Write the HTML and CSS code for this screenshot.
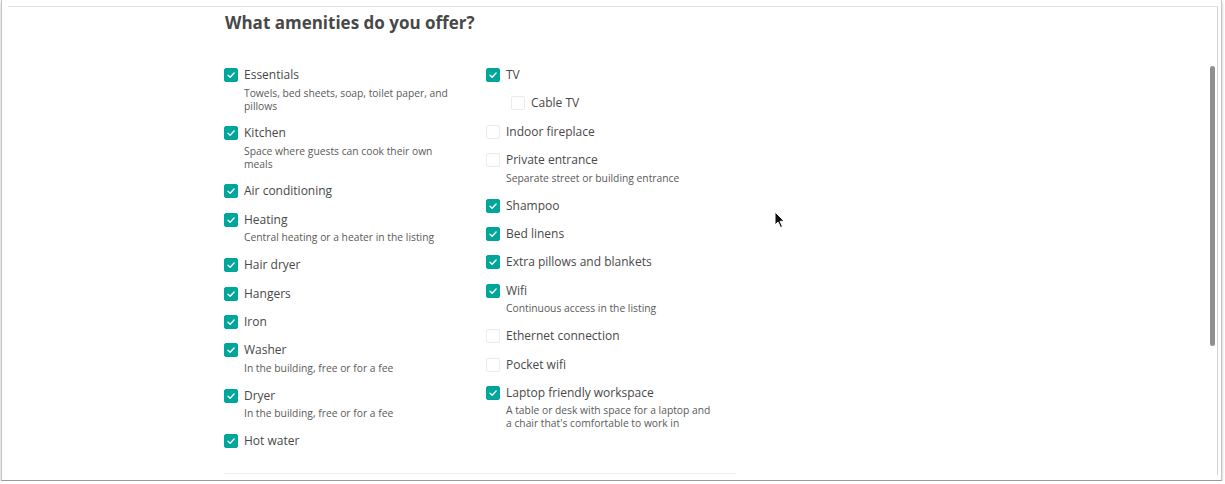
FILE: index.html
```html
<!DOCTYPE html>
<html lang="en">
<head>
  <meta charset="UTF-8" />
  <title>Amenities</title>
  <link rel="stylesheet" href="styles.css">
</head>
<body>
  <div class="window">
    <div class="viewport">
      <div class="content">
        <h2>What amenities do you offer?</h2>

        <div class="columns">
          <!-- left column -->
          <div class="col">
            <div class="item">
              <span class="box on"><svg viewBox="0 0 14 14"><polyline points="3.5,7.2 6,9.6 10.6,4.6" /></svg></span>
              <div><div class="label">Essentials</div><div class="desc">Towels, bed sheets, soap, toilet paper, and pillows</div></div>
            </div>
            <div class="item">
              <span class="box on"><svg viewBox="0 0 14 14"><polyline points="3.5,7.2 6,9.6 10.6,4.6" /></svg></span>
              <div><div class="label">Kitchen</div><div class="desc">Space where guests can cook their own meals</div></div>
            </div>
            <div class="item">
              <span class="box on"><svg viewBox="0 0 14 14"><polyline points="3.5,7.2 6,9.6 10.6,4.6" /></svg></span>
              <div><div class="label">Air conditioning</div></div>
            </div>
            <div class="item">
              <span class="box on"><svg viewBox="0 0 14 14"><polyline points="3.5,7.2 6,9.6 10.6,4.6" /></svg></span>
              <div><div class="label">Heating</div><div class="desc">Central heating or a heater in the listing</div></div>
            </div>
            <div class="item">
              <span class="box on"><svg viewBox="0 0 14 14"><polyline points="3.5,7.2 6,9.6 10.6,4.6" /></svg></span>
              <div><div class="label">Hair dryer</div></div>
            </div>
            <div class="item">
              <span class="box on"><svg viewBox="0 0 14 14"><polyline points="3.5,7.2 6,9.6 10.6,4.6" /></svg></span>
              <div><div class="label">Hangers</div></div>
            </div>
            <div class="item">
              <span class="box on"><svg viewBox="0 0 14 14"><polyline points="3.5,7.2 6,9.6 10.6,4.6" /></svg></span>
              <div><div class="label">Iron</div></div>
            </div>
            <div class="item">
              <span class="box on"><svg viewBox="0 0 14 14"><polyline points="3.5,7.2 6,9.6 10.6,4.6" /></svg></span>
              <div><div class="label">Washer</div><div class="desc">In the building, free or for a fee</div></div>
            </div>
            <div class="item">
              <span class="box on"><svg viewBox="0 0 14 14"><polyline points="3.5,7.2 6,9.6 10.6,4.6" /></svg></span>
              <div><div class="label">Dryer</div><div class="desc">In the building, free or for a fee</div></div>
            </div>
            <div class="item">
              <span class="box on"><svg viewBox="0 0 14 14"><polyline points="3.5,7.2 6,9.6 10.6,4.6" /></svg></span>
              <div><div class="label">Hot water</div></div>
            </div>
          </div>

          <!-- right column -->
          <div class="col">
            <div class="item">
              <span class="box on"><svg viewBox="0 0 14 14"><polyline points="3.5,7.2 6,9.6 10.6,4.6" /></svg></span>
              <div><div class="label">TV</div></div>
            </div>
            <div class="item sub">
              <span class="box"></span>
              <div><div class="label">Cable TV</div></div>
            </div>
            <div class="item">
              <span class="box"></span>
              <div><div class="label">Indoor fireplace</div></div>
            </div>
            <div class="item">
              <span class="box"></span>
              <div><div class="label">Private entrance</div><div class="desc">Separate street or building entrance</div></div>
            </div>
            <div class="item">
              <span class="box on"><svg viewBox="0 0 14 14"><polyline points="3.5,7.2 6,9.6 10.6,4.6" /></svg></span>
              <div><div class="label">Shampoo</div></div>
            </div>
            <div class="item">
              <span class="box on"><svg viewBox="0 0 14 14"><polyline points="3.5,7.2 6,9.6 10.6,4.6" /></svg></span>
              <div><div class="label">Bed linens</div></div>
            </div>
            <div class="item">
              <span class="box on"><svg viewBox="0 0 14 14"><polyline points="3.5,7.2 6,9.6 10.6,4.6" /></svg></span>
              <div><div class="label">Extra pillows and blankets</div></div>
            </div>
            <div class="item">
              <span class="box on"><svg viewBox="0 0 14 14"><polyline points="3.5,7.2 6,9.6 10.6,4.6" /></svg></span>
              <div><div class="label">Wifi</div><div class="desc">Continuous access in the listing</div></div>
            </div>
            <div class="item">
              <span class="box"></span>
              <div><div class="label">Ethernet connection</div></div>
            </div>
            <div class="item">
              <span class="box"></span>
              <div><div class="label">Pocket wifi</div></div>
            </div>
            <div class="item">
              <span class="box on"><svg viewBox="0 0 14 14"><polyline points="3.5,7.2 6,9.6 10.6,4.6" /></svg></span>
              <div><div class="label">Laptop friendly workspace</div><div class="desc">A table or desk with space for a laptop and a chair that's comfortable to work in</div></div>
            </div>
          </div>
        </div>

        <div class="divider"></div>
      </div>

      <div class="scrollbar"></div>
      <svg class="cursor" width="12" height="18" viewBox="0 0 12 18">
        <path d="M1 1 L1 14 L4 11 L6.5 16.5 L8.5 15.6 L6.1 10.3 L10.3 10.3 Z" fill="#111" stroke="#fff" stroke-width="1" stroke-linejoin="round" />
      </svg>
    </div>
  </div>
</body>
</html>
```

FILE: styles.css
```css
body {
  margin: 0;
  background: #fff;
  font-family: 'Open Sans', sans-serif;
  color: #484848;
}

.window {
  margin-left: 1px;
  width: 1221px;
  height: 481px;
  padding: 6px 3px 0 6px;
  box-sizing: border-box;
  border-left: 1px solid #c4c4c4;
  border-right: 1px solid #c4c4c4;
  border-bottom: 1px solid #9a9a9a;
  box-shadow: 0 2px 3px rgba(0, 0, 0, 0.25);
  overflow: hidden;
}

.viewport {
  position: relative;
  height: 468px;
  border-top: 1px solid #e2e2e2;
  border-right: 1px solid #d2d2d2;
  overflow: hidden;
}

.content {
  padding-left: 216px;
  width: 512px;
}

h2 {
  margin: 4px 0 31px 1px;
  font-size: 17px;
  line-height: 24px;
  font-weight: 700;
  color: #484848;
}

.columns {
  display: flex;
}

.col {
  flex: none;
  width: 262px;
}

.item {
  display: flex;
  gap: 6px;
  margin-bottom: 10.45px;
}

.item.sub {
  padding-left: 25px;
}

.box {
  flex: none;
  width: 14px;
  height: 14px;
  margin-top: 2px;
  box-sizing: border-box;
  border: 1px solid #ebebeb;
  border-radius: 2px;
  background: #fff;
}

.box.on {
  border-color: #00a699;
  background: #00a699;
}

.box svg {
  display: block;
  width: 12px;
  height: 12px;
}

.box polyline {
  fill: none;
  stroke: #fff;
  stroke-width: 1.6;
  stroke-linecap: round;
  stroke-linejoin: round;
}

.label {
  font-size: 12px;
  line-height: 18px;
}

.desc {
  margin: 2.5px 0 1.3px;
  max-width: 212px;
  font-size: 10.3px;
  line-height: 13px;
  color: #5a5a5a;
}

.divider {
  margin-top: 12.5px;
  height: 1px;
  background: #ededed;
}

.scrollbar {
  position: absolute;
  top: 59px;
  left: 1202px;
  width: 5px;
  height: 280px;
  border-radius: 3px;
  background: #8f8f8f;
}

.cursor {
  position: absolute;
  top: 204px;
  left: 766px;
}
```
